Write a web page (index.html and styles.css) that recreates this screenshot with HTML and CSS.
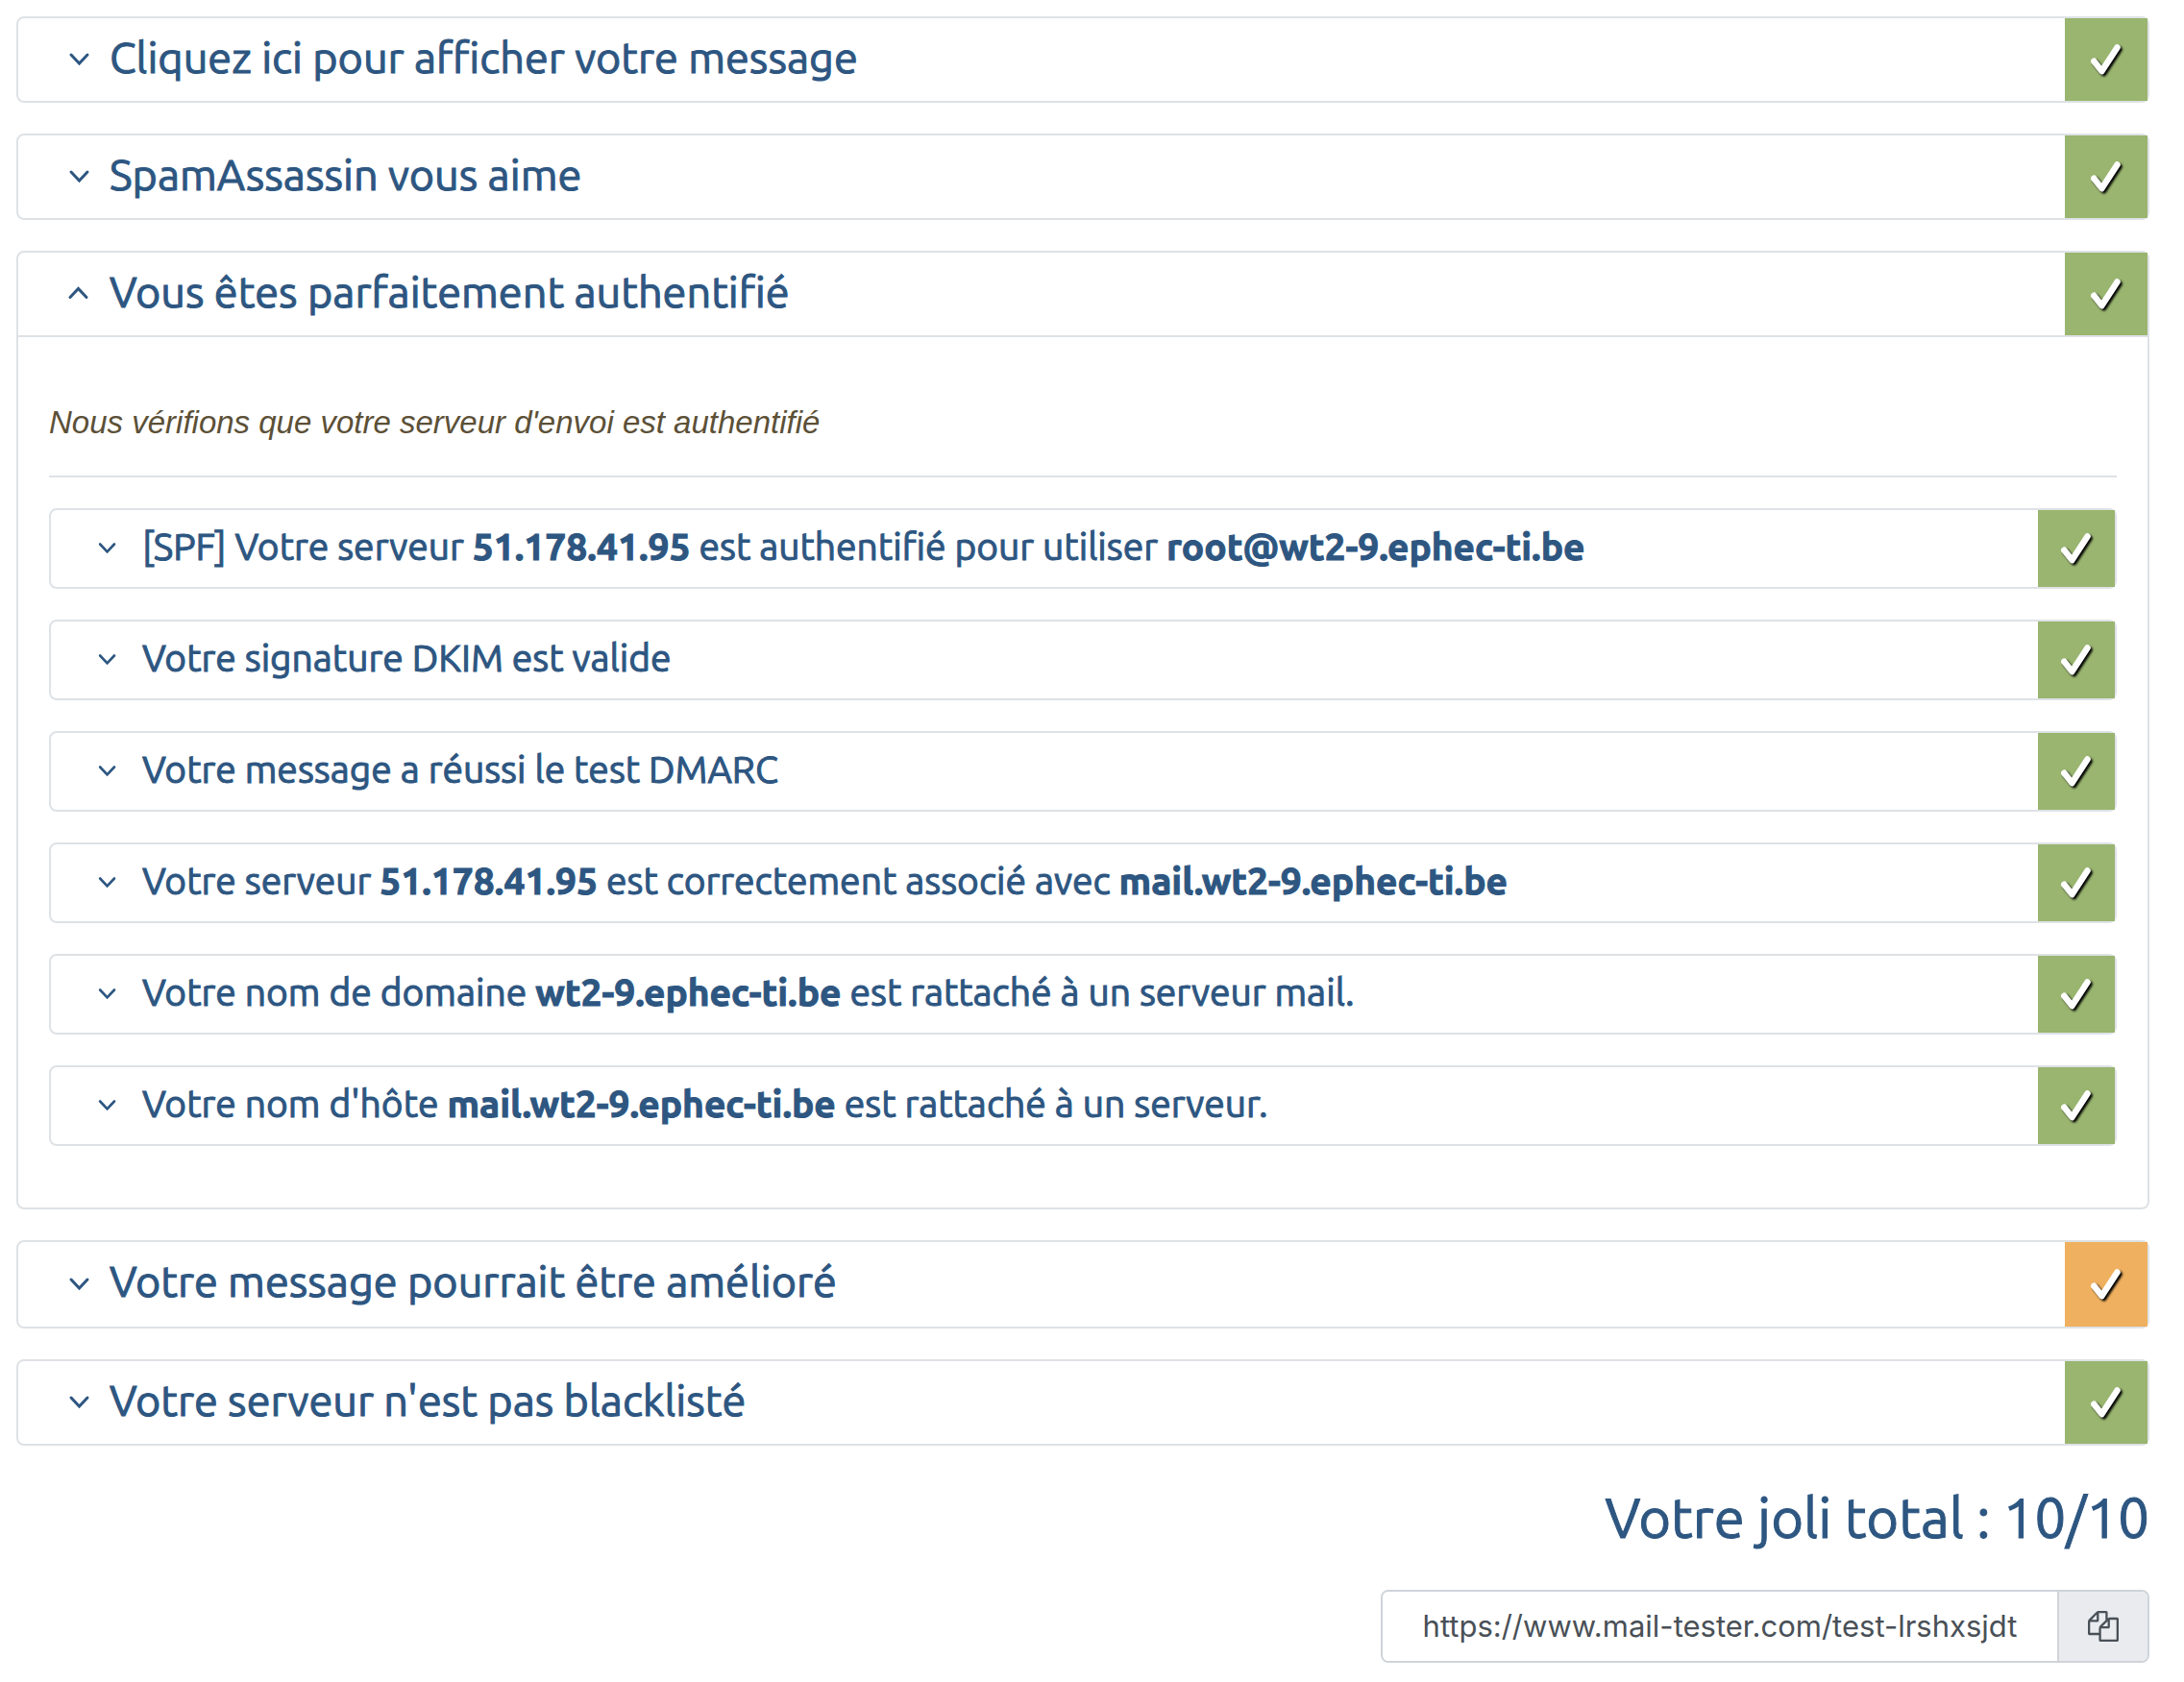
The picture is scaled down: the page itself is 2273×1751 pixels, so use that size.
FILE: index.html
```html
<!DOCTYPE html>
<html lang="fr">
<head>
<meta charset="utf-8">
<meta name="viewport" content="width=device-width, initial-scale=1">
<title>Votre joli total : 10/10</title>
<link rel="stylesheet" href="styles.css">
</head>
<body>
<svg class="sprite" aria-hidden="true">
  <symbol id="chevron-down" viewBox="0 0 32 32"><path class="stroke" d="M7 12l8.500 9l8.500-9"/></symbol>
  <symbol id="chevron-up" viewBox="0 0 32 32"><path class="stroke" d="M6 20.500l8.500-9l8.500 9"/></symbol>
  <symbol id="check" viewBox="0 0 32 32"><path class="tick" d="M3.300 17.800L11.500 28.100L27.500 3.400"/></symbol>
  <symbol id="copy" viewBox="0 0 1792 1792"><path d="M1696 384q40 0 68 28t28 68v1216q0 40-28 68t-68 28h-960q-40 0-68-28t-28-68v-288h-544q-40 0-68-28t-28-68v-672q0-40 20-88t48-76l408-408q28-28 76-48t88-20h416q40 0 68 28t28 68v328q68-40 128-40h416zm-544 213l-299 299h299v-299zm-640-384l-299 299h299v-299zm196 647l316-316v-416h-384v416q0 40-28 68t-68 28h-416v640h512v-256q0-40 20-88t48-76zm956 804v-1152h-384v416q0 40-28 68t-68 28h-416v640h896z"/></symbol>
</svg>
<main class="results">
  <section class="card">
    <h2 class="card-title">
      <button class="toggle" type="button" aria-expanded="false">
        <svg class="chevron"><use href="#chevron-down"/></svg>
        <span class="label">Cliquez ici pour afficher votre message</span>
        <span class="status"><svg class="check"><use href="#check"/></svg></span>
      </button>
    </h2>
  </section>
  <section class="card">
    <h2 class="card-title">
      <button class="toggle" type="button" aria-expanded="false">
        <svg class="chevron"><use href="#chevron-down"/></svg>
        <span class="label">SpamAssassin vous aime</span>
        <span class="status"><svg class="check"><use href="#check"/></svg></span>
      </button>
    </h2>
  </section>
  <section class="card">
    <h2 class="card-title">
      <button class="toggle" type="button" aria-expanded="true" aria-controls="auth-body">
        <svg class="chevron"><use href="#chevron-up"/></svg>
        <span class="label">Vous êtes parfaitement authentifié</span>
        <span class="status"><svg class="check"><use href="#check"/></svg></span>
      </button>
    </h2>
    <div class="card-body" id="auth-body">
      <p class="about">Nous vérifions que votre serveur d'envoi est authentifié</p>
      <hr class="rule">
      <div class="tests">
        <section class="card">
          <h3 class="card-title card-title-small">
            <button class="toggle" type="button" aria-expanded="false">
              <svg class="chevron"><use href="#chevron-down"/></svg>
              <span class="label">[SPF] Votre serveur <b>51.178.41.95</b> est authentifié pour utiliser <b>root@wt2-9.ephec-ti.be</b></span>
              <span class="status"><svg class="check"><use href="#check"/></svg></span>
            </button>
          </h3>
        </section>
        <section class="card">
          <h3 class="card-title card-title-small">
            <button class="toggle" type="button" aria-expanded="false">
              <svg class="chevron"><use href="#chevron-down"/></svg>
              <span class="label">Votre signature DKIM est valide</span>
              <span class="status"><svg class="check"><use href="#check"/></svg></span>
            </button>
          </h3>
        </section>
        <section class="card">
          <h3 class="card-title card-title-small">
            <button class="toggle" type="button" aria-expanded="false">
              <svg class="chevron"><use href="#chevron-down"/></svg>
              <span class="label">Votre message a réussi le test DMARC</span>
              <span class="status"><svg class="check"><use href="#check"/></svg></span>
            </button>
          </h3>
        </section>
        <section class="card">
          <h3 class="card-title card-title-small">
            <button class="toggle" type="button" aria-expanded="false">
              <svg class="chevron"><use href="#chevron-down"/></svg>
              <span class="label">Votre serveur <b>51.178.41.95</b> est correctement associé avec <b>mail.wt2-9.ephec-ti.be</b></span>
              <span class="status"><svg class="check"><use href="#check"/></svg></span>
            </button>
          </h3>
        </section>
        <section class="card">
          <h3 class="card-title card-title-small">
            <button class="toggle" type="button" aria-expanded="false">
              <svg class="chevron"><use href="#chevron-down"/></svg>
              <span class="label">Votre nom de domaine <b>wt2-9.ephec-ti.be</b> est rattaché à un serveur mail.</span>
              <span class="status"><svg class="check"><use href="#check"/></svg></span>
            </button>
          </h3>
        </section>
        <section class="card">
          <h3 class="card-title card-title-small">
            <button class="toggle" type="button" aria-expanded="false">
              <svg class="chevron"><use href="#chevron-down"/></svg>
              <span class="label">Votre nom d'hôte <b>mail.wt2-9.ephec-ti.be</b> est rattaché à un serveur.</span>
              <span class="status"><svg class="check"><use href="#check"/></svg></span>
            </button>
          </h3>
        </section>
      </div>
    </div>
  </section>
  <section class="card card-warning">
    <h2 class="card-title">
      <button class="toggle" type="button" aria-expanded="false">
        <svg class="chevron"><use href="#chevron-down"/></svg>
        <span class="label">Votre message pourrait être amélioré</span>
        <span class="status"><svg class="check"><use href="#check"/></svg></span>
      </button>
    </h2>
  </section>
  <section class="card">
    <h2 class="card-title">
      <button class="toggle" type="button" aria-expanded="false">
        <svg class="chevron"><use href="#chevron-down"/></svg>
        <span class="label">Votre serveur n'est pas blacklisté</span>
        <span class="status"><svg class="check"><use href="#check"/></svg></span>
      </button>
    </h2>
  </section>
</main>
<footer class="summary">
  <h1 class="total">Votre joli total : 10/10</h1>
  <div class="share">
    <input class="share-url" type="text" readonly aria-label="Lien du test" value="https://www.mail-tester.com/test-lrshxsjdt">
    <button class="share-copy" type="button" aria-label="Copier le lien"><svg class="copy"><use href="#copy"/></svg></button>
  </div>
</footer>
</body>
</html>
```
FILE: styles.css
```css
:root {
  --blue: #2d5681;
  --green: #99b56f;
  --orange: #efb05f;
  --line: #dee2e6;
  --field-line: #ced4da;
  --field-text: #495057;
}

* {
  box-sizing: border-box;
}

body {
  margin: 0;
  padding: 17px 36px 20px 17px;
  background: #fff;
  color: var(--blue);
  font-family: Ubuntu, "Noto Sans", sans-serif;
}

.sprite {
  display: none;
}

.stroke {
  fill: none;
  stroke: currentColor;
  stroke-width: 3;
  stroke-linecap: round;
}

.tick {
  fill: none;
  stroke: #fff;
  stroke-width: 6.5;
  stroke-linecap: round;
  stroke-linejoin: round;
}

.results,
.tests {
  display: flex;
  flex-direction: column;
  gap: 32px;
}

.card {
  border: 2px solid var(--line);
  border-radius: 8px;
}

.card-title {
  margin: 0;
  font-size: 45px;
  line-height: 54px;
  font-weight: 450;
}

.toggle {
  display: flex;
  align-items: stretch;
  width: 100%;
  padding: 0 0 0 48px;
  border: 0;
  background: none;
  color: inherit;
  font: inherit;
  text-align: left;
  cursor: pointer;
}

.label {
  flex: 1;
  padding: 14px 0 18px 15px;
}

.label,
.total {
  -webkit-text-stroke: 1px currentColor;
}

.label b {
  font-weight: 700;
}

.chevron {
  flex: none;
  align-self: center;
  width: 32px;
  height: 32px;
  margin-bottom: 2px;
}

.status {
  display: flex;
  flex: none;
  align-items: center;
  justify-content: center;
  width: 86px;
  background: var(--green);
}

.check {
  width: 32px;
  height: 32px;
  overflow: visible;
  filter: drop-shadow(2px 2px 1px #000);
}

.card-title-small {
  font-size: 39px;
  line-height: 48px;
  font-weight: 400;
}

.card-title-small .toggle {
  padding-left: 45px;
}

.card-title-small .label {
  padding-left: 22px;
}

.card-title-small .chevron {
  width: 28px;
  height: 28px;
}

.card-title-small .status {
  width: 80px;
}

.card-warning .label {
  padding-bottom: 20px;
}

.card-warning .status {
  background: var(--orange);
}

.card-body {
  padding: 64px 32px;
  border-top: 2px solid var(--line);
}

.about {
  margin: 0;
  color: #5c5037;
  font: italic 33px/50px "Liberation Sans", Arial, sans-serif;
}

.rule {
  margin: 30px 0 32px;
  border: 0;
  border-top: 2px solid var(--line);
}

.summary {
  display: flex;
  flex-direction: column;
  align-items: flex-end;
  gap: 40px;
  margin-top: 40px;
}

.total {
  margin: 0;
  font-size: 58px;
  line-height: 70px;
  font-weight: 450;
}

.share {
  display: flex;
  width: 800px;
  max-width: 100%;
  height: 76px;
  border: 2px solid var(--field-line);
  border-radius: 8px;
  overflow: hidden;
}

.share-url {
  flex: 1;
  min-width: 0;
  padding: 0 24px;
  border: 0;
  background: #fff;
  color: var(--field-text);
  font: 31px/48px Inter, "Liberation Sans", sans-serif;
  text-align: center;
}

.share-copy {
  display: flex;
  align-items: center;
  justify-content: center;
  width: 94px;
  padding: 0;
  border: 0;
  border-left: 2px solid var(--field-line);
  background: #e9ebef;
  color: var(--field-text);
  cursor: pointer;
}

.copy {
  width: 32px;
  height: 32px;
  fill: currentColor;
}
```
